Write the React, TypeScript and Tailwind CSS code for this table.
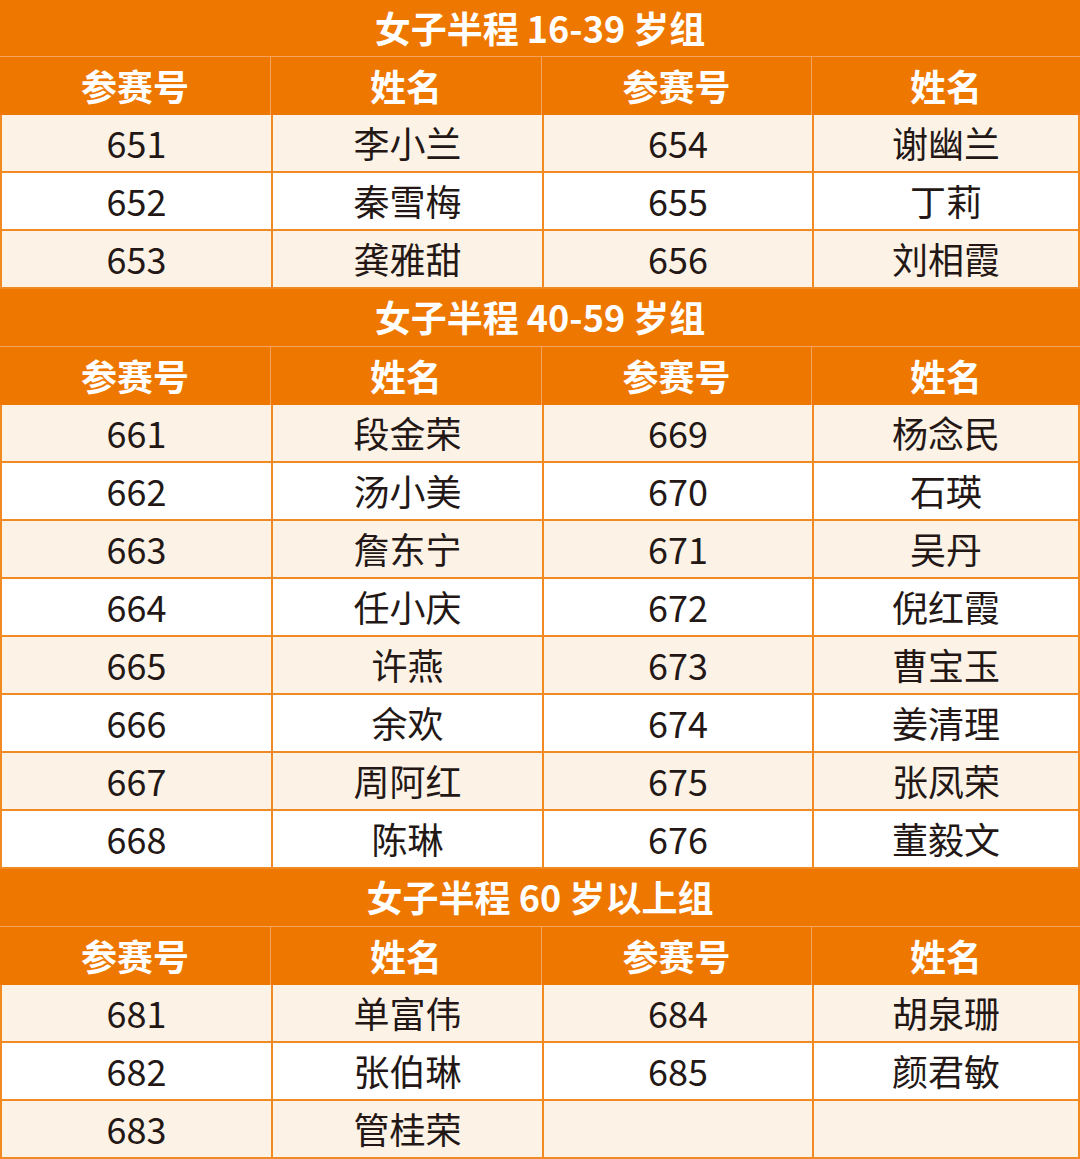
const sections = [
  {
    title: "女子半程 16-39 岁组",
    rows: [
      ["651", "李小兰", "654", "谢幽兰"],
      ["652", "秦雪梅", "655", "丁莉"],
      ["653", "龚雅甜", "656", "刘相霞"],
    ],
  },
  {
    title: "女子半程 40-59 岁组",
    rows: [
      ["661", "段金荣", "669", "杨念民"],
      ["662", "汤小美", "670", "石瑛"],
      ["663", "詹东宁", "671", "吴丹"],
      ["664", "任小庆", "672", "倪红霞"],
      ["665", "许燕", "673", "曹宝玉"],
      ["666", "余欢", "674", "姜清理"],
      ["667", "周阿红", "675", "张凤荣"],
      ["668", "陈琳", "676", "董毅文"],
    ],
  },
  {
    title: "女子半程 60 岁以上组",
    rows: [
      ["681", "单富伟", "684", "胡泉珊"],
      ["682", "张伯琳", "685", "颜君敏"],
      ["683", "管桂荣", "", ""],
    ],
  },
];

const headers = ["参赛号", "姓名", "参赛号", "姓名"];

export default function App() {
  return (
    <div
      className="w-[1080px] bg-white"
      style={{ fontFamily: '"Noto Sans CJK SC", "Noto Sans", sans-serif' }}
    >
      {sections.map((section, s) => (
        <div key={section.title}>
          <div
            className={`flex items-center justify-center border-b border-[#f5a45c] bg-[#ee7700] pb-[3px] text-[36px] font-bold leading-none text-white ${
              s === 0 ? "h-[57px]" : "h-[58px]"
            }`}
          >
            {section.title}
          </div>
          <div className="grid h-[58px] grid-cols-[271px_271px_270px_1fr] bg-[#ee7700]">
            {headers.map((h, i) => (
              <div
                key={i}
                className={`flex items-center justify-center pb-[3px] text-[36px] font-bold leading-none text-white ${
                  i < 3 ? "border-r border-[#f5a45c]" : ""
                }`}
              >
                {h}
              </div>
            ))}
          </div>
          {section.rows.map((row, r) => (
            <div
              key={r}
              className={`grid h-[58px] grid-cols-[271px_271px_270px_1fr] border-x-2 border-b-2 border-[#f28a24] ${
                r % 2 === 0 ? "bg-[#fdf2e6]" : "bg-white"
              }`}
            >
              {row.map((cell, i) => (
                <div
                  key={i}
                  className={`flex items-center justify-center pb-[3px] text-[36px] leading-none text-[#231815] ${
                    i < 3 ? "border-r-2 border-[#f28a24]" : ""
                  }`}
                >
                  {cell}
                </div>
              ))}
            </div>
          ))}
        </div>
      ))}
    </div>
  );
}
